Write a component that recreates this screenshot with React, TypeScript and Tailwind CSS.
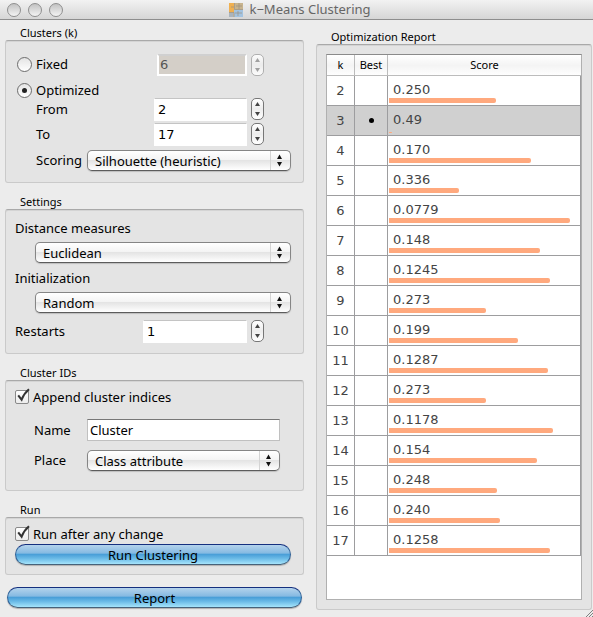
import React, { useId, useState } from "react";

type Row = { k: number; score: string; bar: number };

const BAR_SPACE = 191;

const rows: Row[] = [
  { k: 2, score: "0.250", bar: 107 },
  { k: 3, score: "0.49", bar: 3 },
  { k: 4, score: "0.170", bar: 142 },
  { k: 5, score: "0.336", bar: 70 },
  { k: 6, score: "0.0779", bar: 181 },
  { k: 7, score: "0.148", bar: 151 },
  { k: 8, score: "0.1245", bar: 161 },
  { k: 9, score: "0.273", bar: 97 },
  { k: 10, score: "0.199", bar: 129 },
  { k: 11, score: "0.1287", bar: 159 },
  { k: 12, score: "0.273", bar: 97 },
  { k: 13, score: "0.1178", bar: 164 },
  { k: 14, score: "0.154", bar: 148 },
  { k: 15, score: "0.248", bar: 108 },
  { k: 16, score: "0.240", bar: 111 },
  { k: 17, score: "0.1258", bar: 161 },
];

const BEST_K = 3;

function Group({
  title,
  className = "",
  bodyClass,
  children,
}: {
  title: string;
  className?: string;
  bodyClass: string;
  children: React.ReactNode;
}) {
  const id = useId();
  return (
    <section aria-labelledby={id} className={`flex flex-col ${className}`}>
      <h2 id={id} className="h-[15px] pl-[15px] text-[11px] leading-4 text-black">
        {title}
      </h2>
      <div
        className={`flex flex-col rounded-[3px] border border-[#cacaca] border-t-[#a9a9a9] bg-[#e4e4e4] shadow-[inset_0_1px_0_#d4d4d4] ${bodyClass}`}
      >
        {children}
      </div>
    </section>
  );
}

function Stepper({ name, disabled = false }: { name: string; disabled?: boolean }) {
  return (
    <div
      className={`ml-1 flex h-[22px] w-[13px] shrink-0 flex-col overflow-hidden rounded-[5px] border bg-linear-to-b from-white via-[#ededed] to-white ${
        disabled ? "border-[#aaaaaa] text-[#999999] opacity-90" : "border-[#777777] text-[#444444]"
      }`}
    >
      <button type="button" disabled={disabled} aria-label={`Increase ${name}`} className="flex flex-1 items-center justify-center">
        <svg viewBox="0 0 5 4" className="h-1 w-[5px]" fill="currentColor">
          <path d="M2.5 0L5 4H0z" />
        </svg>
      </button>
      <button type="button" disabled={disabled} aria-label={`Decrease ${name}`} className="flex flex-1 items-center justify-center">
        <svg viewBox="0 0 5 4" className="h-1 w-[5px]" fill="currentColor">
          <path d="M0 0H5L2.5 4z" />
        </svg>
      </button>
    </div>
  );
}

function Dropdown({ id, value, className = "" }: { id: string; value: string; className?: string }) {
  return (
    <div className={`relative h-[21px] min-w-0 ${className}`}>
      <select
        id={id}
        className="block h-full w-full appearance-none rounded-[5px] border border-[#858585] border-b-[#5c5c5c] bg-[linear-gradient(#ffffff_0%,#f4f4f4_45%,#e4e4e4_50%,#ffffff_100%)] pr-6 pl-[7px] text-[13px] leading-[18px] text-black shadow-[0_1px_1px_#bdbdbd]"
      >
        <option>{value}</option>
      </select>
      <svg
        viewBox="0 0 20 19"
        className="pointer-events-none absolute top-px right-px h-[19px] w-5"
        aria-hidden="true"
      >
        <path d="M0.5 0V19" stroke="#d4d4d4" />
        <path d="M9.5 3.5L12 8H7zM9.5 15.5L12 11H7z" fill="#111111" />
      </svg>
    </div>
  );
}

function CheckRow({ label }: { label: string }) {
  const [on, setOn] = useState(true);
  return (
    <label className="flex h-4 items-center gap-1">
      <span className="relative block size-[14px]">
        <input
          type="checkbox"
          checked={on}
          onChange={() => setOn(!on)}
          className="block size-[14px] appearance-none rounded-[2px] border border-[#8a8a8a] bg-linear-to-b from-white to-[#ededed]"
        />
        {on && (
          <svg viewBox="0 0 16 16" className="pointer-events-none absolute -top-0.5 left-0 size-4" aria-hidden="true">
            <path d="M3.2 7.4L6.6 11.6Q9 5.4 14 1.2" fill="none" stroke="#333333" strokeWidth="2.1" />
          </svg>
        )}
      </span>
      <span className="text-[13px] leading-4">{label}</span>
    </label>
  );
}

const radioClass =
  "grid size-[15px] appearance-none place-items-center rounded-full border border-[#6d6d6d] bg-linear-to-b from-[#e4e4e4] to-white before:size-[5px] before:rounded-full checked:before:bg-[#222222]";

const numberClass =
  "min-w-0 flex-1 border border-white border-t-[#c4c4c4] bg-white px-[3px] font-['DejaVu_Sans',sans-serif] text-[13px] text-black";

const aquaClass =
  "h-[21px] rounded-full border border-[#2c5f96] border-t-[#15307f] border-b-[#46627a] bg-[linear-gradient(#b4d3ec_0%,#86bae2_42%,#4a9fd8_50%,#69b9e6_70%,#a5e4fb_100%)] text-[13px] leading-[18px] text-black shadow-[0_1px_1px_#b0b0b0]";

export default function App() {
  const [mode, setMode] = useState("optimized");
  return (
    <div className="relative flex min-h-screen flex-col bg-[#ececec] font-['Noto_Sans','DejaVu_Sans',sans-serif] text-[13px] text-black">
      <header className="flex h-5 items-center border-b border-[#8e8e8e] bg-linear-to-b from-[#f2f2f2] to-[#d6d6d6]">
        <div className="flex flex-1 gap-[7px] pl-[7px]">
          {["Close", "Minimize", "Zoom"].map((name) => (
            <button
              key={name}
              type="button"
              aria-label={name}
              className="size-[14px] rounded-full border border-[#8f8f8f] bg-linear-to-b from-[#c2c2c2] to-[#f4f4f4]"
            />
          ))}
        </div>
        <div className="flex items-center gap-[6px]">
          <svg viewBox="0 0 14 14" className="size-[14px]" aria-hidden="true">
            <path d="M0 0H14V14H0z" fill="#c9bda8" />
            <path d="M0 0H5V9H0z" fill="#f0b050" />
            <path d="M6 0H14V6H6z" fill="#c8b48e" />
            <path d="M5 7H14V14H5z" fill="#a3c3e0" />
            <path d="M0 10H4V14H0z" fill="#aab4bd" />
            <path d="M5.5 0V6.5H14M7 3H13M10 0V6M2 4H5M0 9.5H5V14M6 10H13M9 8V13" fill="none" stroke="#9b917f" strokeWidth="0.7" />
          </svg>
          <h1 className="text-[13px] leading-[19px] text-[#666666]">k−Means Clustering</h1>
        </div>
        <div className="flex-1" />
      </header>

      <main className="grid flex-1 grid-cols-[minmax(0,299fr)_minmax(0,276fr)] gap-3 pr-px pb-[7px] pl-[5px]">
        <div className="flex flex-col gap-[11px] pt-[5px] pb-[2px]">
          <Group title="Clusters (k)" bodyClass="pt-3 pr-3 pb-[11px] pl-[9px]">
            <div className="mr-[27px] flex h-[23px] items-center">
              <label className="flex w-[142px] items-center gap-1 pl-[2px]">
                <input type="radio" name="mode" checked={mode === "fixed"} onChange={() => setMode("fixed")} className={radioClass} />
                Fixed
              </label>
              <input
                aria-label="Fixed number of clusters"
                defaultValue="6"
                disabled
                className="h-[22px] min-w-0 flex-1 border-2 border-white border-t-[#d0d0d0] bg-[#d4cfc8] px-px font-['DejaVu_Sans',sans-serif] text-[13px] text-[#555555]"
              />
              <Stepper name="fixed clusters" disabled />
            </div>
            <label className="mt-[7px] flex h-[15px] items-center gap-1 pl-[2px]">
              <input
                type="radio"
                name="mode"
                checked={mode === "optimized"}
                onChange={() => setMode("optimized")}
                className={radioClass}
              />
              Optimized
            </label>
            <div className="mr-[27px] flex h-[23px]">
              <label htmlFor="from" className="w-[139px] pl-[21px] leading-[23px]">
                From
              </label>
              <input id="from" defaultValue="2" className={numberClass} />
              <Stepper name="from" />
            </div>
            <div className="mt-[2px] mr-[27px] flex h-[23px]">
              <label htmlFor="to" className="w-[139px] pl-[21px] leading-[23px]">
                To
              </label>
              <input id="to" defaultValue="17" className={numberClass} />
              <Stepper name="to" />
            </div>
            <div className="mt-1 flex">
              <label htmlFor="scoring" className="w-[72px] pl-[21px] leading-5">
                Scoring
              </label>
              <Dropdown id="scoring" value="Silhouette (heuristic)" className="flex-1" />
            </div>
          </Group>

          <Group title="Settings" bodyClass="pt-2 pr-3 pb-[10px] pl-[9px]">
            <label htmlFor="distance" className="leading-5">
              Distance measures
            </label>
            <Dropdown id="distance" value="Euclidean" className="mt-1 ml-5" />
            <label htmlFor="init" className="mt-[5px] leading-5">
              Initialization
            </label>
            <Dropdown id="init" value="Random" className="mt-1 ml-5" />
            <div className="mt-[7px] mr-[27px] flex h-[23px]">
              <label htmlFor="restarts" className="w-[128px] leading-[23px]">
                Restarts
              </label>
              <input id="restarts" defaultValue="1" className={numberClass} />
              <Stepper name="restarts" />
            </div>
          </Group>

          <Group title="Cluster IDs" bodyClass="pt-2 pr-[23px] pb-[19px] pl-[9px]">
            <CheckRow label="Append cluster indices" />
            <div className="mt-[14px] flex h-[22px]">
              <label htmlFor="name" className="w-[72px] pl-[19px] leading-[22px]">
                Name
              </label>
              <input
                id="name"
                defaultValue="Cluster"
                className="min-w-0 flex-1 border border-[#c0c0c0] border-t-[#777777] bg-white px-[2px] pt-[2px] text-[13px] text-black"
              />
            </div>
            <div className="mt-[9px] flex">
              <label htmlFor="place" className="w-[72px] pl-[19px] leading-5">
                Place
              </label>
              <Dropdown id="place" value="Class attribute" className="flex-1" />
            </div>
          </Group>

          <Group title="Run" bodyClass="pt-2 pr-3 pb-[9px] pl-[9px]">
            <CheckRow label="Run after any change" />
            <button type="button" className={`mt-[2px] ${aquaClass}`}>
              Run Clustering
            </button>
          </Group>

          <button type="button" className={`mx-[2px] mt-px ${aquaClass}`}>
            Report
          </button>
        </div>

        <Group title="Optimization Report" className="pt-[9px]" bodyClass="flex-1 p-[9px]">
          <div className="flex-1 border border-[#b0b0b0] border-t-[#8a8a8a] bg-white">
            <table className="w-full table-fixed border-separate border-spacing-0">
              <thead>
                <tr className="h-[21px] bg-linear-to-b from-white via-[#f4f4f4] to-white text-[11px] leading-5 text-black">
                  <th className="w-7 border-r border-b border-[#bcbcbc] p-0 font-normal">k</th>
                  <th className="w-[33px] border-r border-b border-[#bcbcbc] p-0 font-normal">Best</th>
                  <th className="border-b border-[#bcbcbc] p-0 font-normal">Score</th>
                </tr>
              </thead>
              <tbody className="font-['DejaVu_Sans',sans-serif] text-[13px] text-[#444444]">
                {rows.map((row) => {
                  const best = row.k === BEST_K;
                  return (
                    <tr key={row.k} className={`h-[30px] ${best ? "bg-[#d0d0d0]" : "bg-white"}`}>
                      <td className="border-r border-b border-[#9d9d9f] p-0 text-center leading-[29px]">{row.k}</td>
                      <td className="border-r border-b border-[#9d9d9f] p-0">
                        {best && <span className="mx-auto block size-[5px] rounded-full bg-black" />}
                      </td>
                      <td className="border-r border-b border-[#9d9d9f] p-0 pl-px align-top">
                        <div className="h-[22px] pl-1 leading-[27px]">{row.score}</div>
                        <div
                          className={`rounded-r-[2px] bg-[#ffa97e] ${best ? "mt-1 h-px" : "h-[5px]"}`}
                          style={{ width: `${(row.bar / BAR_SPACE) * 100}%` }}
                        />
                      </td>
                    </tr>
                  );
                })}
              </tbody>
            </table>
          </div>
        </Group>
      </main>

      <svg viewBox="0 0 8 8" className="pointer-events-none absolute right-0 bottom-0 size-2" aria-hidden="true">
        <path d="M1 8L8 1M4 8L8 4M7 8L8 7" stroke="#808080" strokeWidth="1" />
      </svg>
    </div>
  );
}
